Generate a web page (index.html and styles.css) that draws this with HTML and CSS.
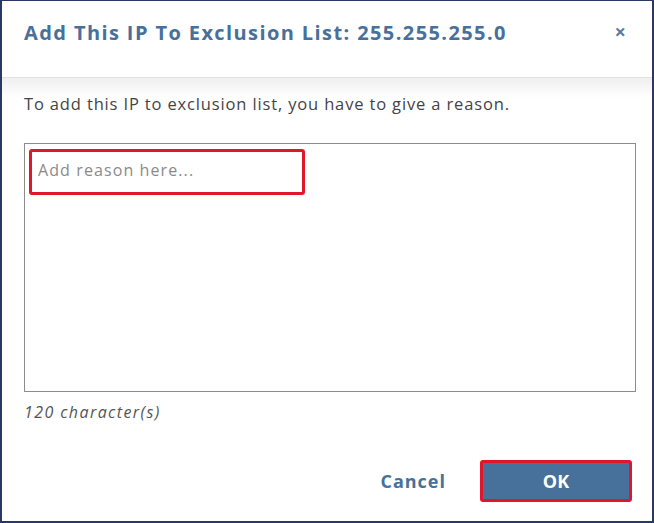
FILE: index.html
```html
<!DOCTYPE html>
<html>
<head>
<meta charset="utf-8">
<link rel="stylesheet" href="styles.css">
</head>
<body>
<div class="frame">
  <div class="header">
    <h1 class="title">Add This IP To Exclusion List: 255.255.255.0</h1>
    <span class="close">×</span>
  </div>
  <div class="content">
    <p class="intro">To add this IP to exclusion list, you have to give a reason.</p>
    <div class="textarea">
      <div class="input-mark">Add reason here...</div>
    </div>
    <p class="count">120 character(s)</p>
    <div class="actions">
      <span class="cancel">Cancel</span>
      <span class="ok">OK</span>
    </div>
  </div>
</div>
</body>
</html>
```
FILE: styles.css
```css
html, body {
  margin: 0;
  padding: 0;
  background: #fff;
}
.frame {
  width: 654px;
  height: 523px;
  box-sizing: border-box;
  border: 2px solid #2a3962;
  border-top-width: 1px;
  background: #fff;
  font-family: "Open Sans", "Liberation Sans", sans-serif;
  display: flex;
  flex-direction: column;
}
.header {
  height: 77px;
  box-sizing: border-box;
  padding: 0 26px 14px 22px;
  display: flex;
  align-items: center;
  justify-content: space-between;
  border-bottom: 1px solid #e2e2e2;
}
.title {
  margin: 0;
  font-size: 20px;
  font-weight: 700;
  color: #47709a;
  letter-spacing: 1.4px;
}
.close {
  font-size: 20px;
  font-weight: 700;
  color: #5b7ea0;
  line-height: 1;
}
.content {
  flex: 1;
  background: linear-gradient(#efefef, #ffffff 20px);
  padding: 0 16px 0 22px;
  display: flex;
  flex-direction: column;
}
.intro {
  margin: 15px 0 0 0;
  font-size: 16.5px;
  color: #444;
  line-height: 22px;
  letter-spacing: 0.85px;
}
.textarea {
  margin-top: 28px;
  height: 249px;
  box-sizing: border-box;
  border: 1px solid #8c8c8c;
  padding: 5px 0 0 4px;
}
.input-mark {
  width: 276px;
  height: 46px;
  box-sizing: border-box;
  border: 3px solid #e0162b;
  border-radius: 3px;
  padding: 0 0 5px 6px;
  font-size: 16px;
  color: #8a8a8a;
  display: flex;
  align-items: center;
  letter-spacing: 1.1px;
}
.count {
  margin: 9px 0 0 0;
  font-size: 16px;
  font-style: italic;
  color: #555;
  line-height: 22px;
  letter-spacing: 1.4px;
}
.actions {
  margin-top: 37px;
  display: flex;
  justify-content: flex-end;
  align-items: center;
  gap: 34px;
  padding-right: 4px;
}
.cancel {
  font-size: 18px;
  font-weight: 700;
  color: #47709a;
  letter-spacing: 1px;
}
.ok {
  width: 152px;
  height: 42px;
  box-sizing: border-box;
  border: 3px solid #e0162b;
  border-radius: 3px;
  background: #47709a;
  color: #fff;
  font-size: 18px;
  font-weight: 700;
  display: flex;
  align-items: center;
  justify-content: center;
}
```
